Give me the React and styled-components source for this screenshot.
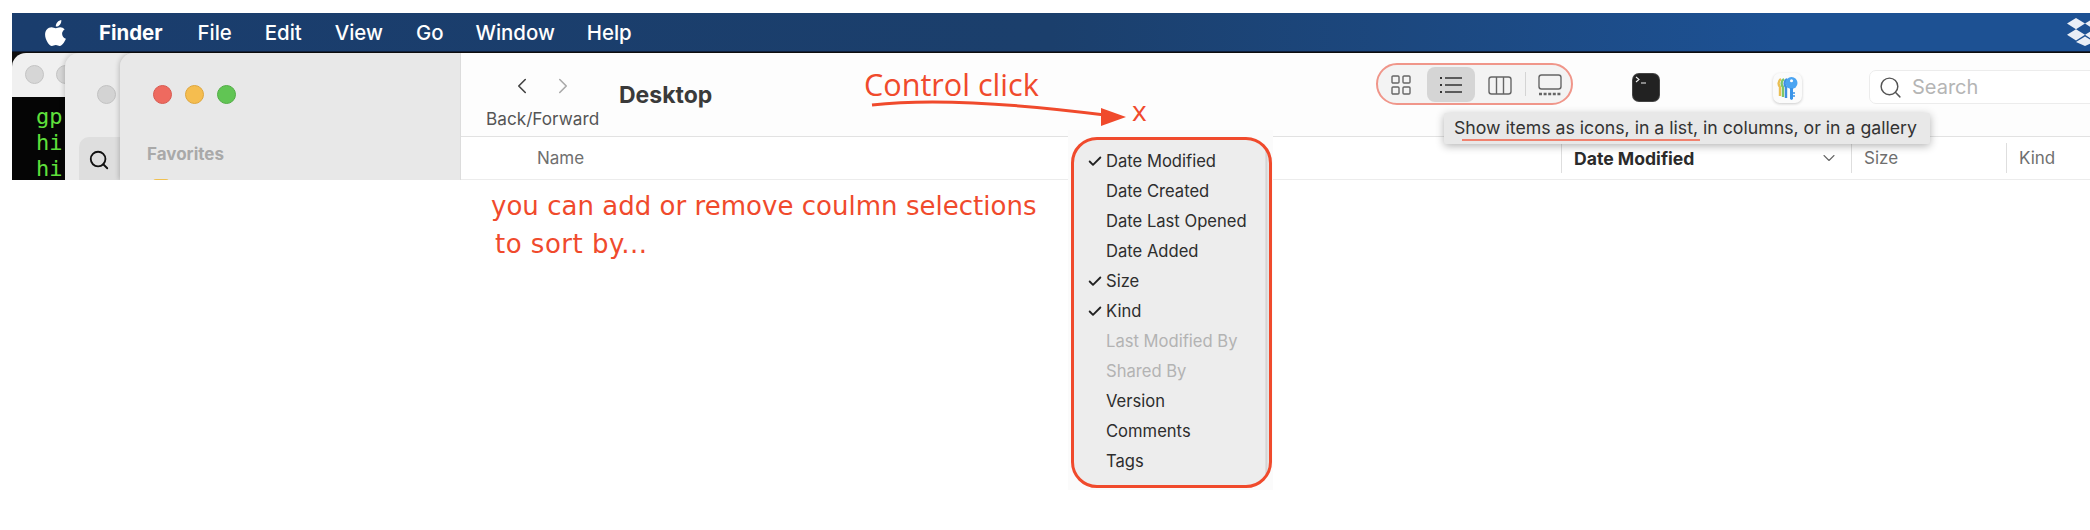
import React from 'react';
import styled, { createGlobalStyle } from 'styled-components';
import { Check, ChevronDown, ChevronLeft, ChevronRight, Search } from 'lucide-react';

const sans = '"Inter", "Liberation Sans", sans-serif';
const red = '#f04a2c';

const GlobalStyle = createGlobalStyle`
  html, body {
    margin: 0;
    height: 100%;
    background: #fff;
    overflow: hidden;
  }

  #root {
    height: 100%;
  }
`;

const Page = styled.div`
  position: relative;
  width: 2090px;
  height: 530px;
  padding: 13px 0 0 12px;
  box-sizing: border-box;
  overflow: hidden;
  font-family: ${sans};
`;

const MenuBar = styled.header`
  display: flex;
  align-items: center;
  height: 38px;
  padding-left: 33px;
  background: linear-gradient(90deg, #1a3d6d 0%, #1b3f6c 50%, #1d5193 85%, #1d5193 100%);
  border-bottom: 1px solid #10203c;
  overflow: hidden;
`;

const AppleLogo = styled.svg`
  width: 23px;
  height: 27px;
  margin-right: 31px;
  fill: #fff;
  flex: none;
`;

const MenuItem = styled.span`
  margin-right: ${(p) => p.$gap}px;
  color: #fff;
  font-size: 20.4px;
  font-weight: ${(p) => (p.$bold ? 700 : 500)};
`;

const DropboxLogo = styled.svg`
  width: 36px;
  height: 28px;
  margin-left: auto;
  margin-right: -13px;
  fill: #e9eef6;
  flex: none;
`;

const Desktop = styled.div`
  position: relative;
  height: 128px;
  background: #101010;
  overflow: hidden;
`;

const BackWindow = styled.div`
  position: absolute;
  top: 1px;
  left: ${(p) => p.$left}px;
  bottom: 0;
  width: 300px;
  border-radius: 14px 0 0 0;
  background: ${(p) => p.$bg};
  box-shadow: -1px 0 5px rgba(0, 0, 0, 0.18);
`;

const TerminalTitle = styled.div`
  display: flex;
  gap: 12px;
  height: 44px;
  padding: 12px 0 0 13px;
  box-sizing: border-box;
`;

const TerminalBody = styled.div`
  height: 84px;
  padding: 7px 0 0 24px;
  box-sizing: border-box;
  background: #050505;
  color: #5fe03c;
  font-family: "DejaVu Sans Mono", monospace;
  font-size: 22px;
  line-height: 26px;
  overflow: hidden;
`;

const TerminalLine = styled.div``;

const Light = styled.span`
  width: 19px;
  height: 19px;
  border-radius: 50%;
  box-sizing: border-box;
  background: ${(p) => p.$color};
  border: 1px solid ${(p) => p.$edge};
  flex: none;
`;

const MiddleHead = styled.div`
  padding: 32px 0 0 32px;
`;

const SearchTile = styled.div`
  width: 70px;
  height: 60px;
  margin: 33px 0 0 14px;
  padding: 12px 0 0 9px;
  box-sizing: border-box;
  border-radius: 10px;
  background: #dedede;
  color: #111;
`;

const FinderWindow = styled.div`
  position: absolute;
  top: 1px;
  left: 108px;
  right: 0;
  bottom: 0;
  display: flex;
  border-radius: 14px 0 0 0;
  overflow: hidden;
  box-shadow: -1px 0 5px rgba(0, 0, 0, 0.2);
`;

const Sidebar = styled.aside`
  position: relative;
  width: 341px;
  flex: none;
  padding: 32px 0 0 33px;
  box-sizing: border-box;
  background: #e8e8e8;
  border-right: 1px solid #dcdcdc;
`;

const Lights = styled.div`
  display: flex;
  gap: 13px;
`;

const SidebarLabel = styled.div`
  margin: 39px 0 0 -6px;
  color: #a9a9a9;
  font-size: 17px;
  font-weight: 700;
  line-height: 22px;
`;

const FolderTip = styled.div`
  width: 16px;
  height: 3px;
  margin: 14px 0 0 0;
  border-radius: 4px 4px 0 0;
  background: #f0c050;
`;

const Main = styled.main`
  flex: 1;
  min-width: 0;
  background: #fff;
`;

const Toolbar = styled.div`
  display: flex;
  height: 83px;
  padding-left: 25px;
  background: #fdfdfd;
  border-bottom: 1px solid #e2e2e2;
`;

const NavBlock = styled.div`
  display: flex;
  flex-direction: column;
  width: 114px;
  flex: none;
`;

const NavArrows = styled.div`
  display: flex;
  gap: 15px;
  margin: 20px 0 0 23px;
  height: 26px;
  align-items: center;
`;

const NavLabel = styled.div`
  margin-top: 10px;
  color: #555;
  font-size: 17.2px;
  line-height: 20px;
  white-space: nowrap;
`;

const Title = styled.h1`
  margin: 28px 0 0 19px;
  color: #3a3a3a;
  font-size: 23px;
  font-weight: 700;
  line-height: 28px;
`;

const ToolbarRight = styled.div`
  display: flex;
  margin-left: auto;
  width: 714px;
  flex: none;
`;

const ViewPill = styled.div`
  display: flex;
  align-items: center;
  width: 197px;
  height: 42px;
  margin-top: 10px;
  padding-left: 3px;
  box-sizing: border-box;
  border: 2px solid #f0968a;
  border-radius: 21px;
  background: #f3f3f3;
  flex: none;
`;

const ViewButton = styled.div`
  display: flex;
  align-items: center;
  justify-content: center;
  width: ${(p) => p.$width}px;
  height: 35px;
  margin-top: 1px;
  margin-right: ${(p) => p.$after || 0}px;
  border-radius: 8px;
  background: ${(p) => (p.$active ? '#d5d5d5' : 'transparent')};
  flex: none;
`;

const ViewDivider = styled.span`
  width: 1px;
  height: 24px;
  background: #d4d4d4;
  flex: none;
`;

const TerminalIcon = styled.div`
  width: 26px;
  height: 27px;
  margin: 21px 0 0 60px;
  padding: 2px 0 0 2px;
  box-sizing: border-box;
  border-radius: 6px;
  background: #222;
  box-shadow: 0 0 0 1px #444;
  color: #eee;
  flex: none;

  > svg {
    display: block;
  }
`;

const KeysIcon = styled.div`
  display: flex;
  align-items: center;
  justify-content: center;
  width: 29px;
  height: 30px;
  margin: 20px 0 0 114px;
  border-radius: 7px;
  background: #fbfbfb;
  box-shadow: 0 1px 3px rgba(0, 0, 0, 0.2);
  flex: none;
`;

const SearchField = styled.div`
  display: flex;
  align-items: center;
  gap: 9px;
  width: 240px;
  height: 34px;
  margin: 17px 0 0 67px;
  padding-left: 8px;
  box-sizing: border-box;
  border: 1px solid #ececec;
  border-radius: 7px;
  background: #fff;
  color: #555;
  flex: none;
`;

const SearchText = styled.span`
  color: #b5b5b5;
  font-size: 20px;
`;

const ColumnHeader = styled.div`
  display: grid;
  grid-template-columns: 1100px 290px 155px 1fr;
  align-items: center;
  height: 43px;
  box-sizing: border-box;
  border-bottom: 1px solid #ececec;
`;

const Column = styled.div`
  display: flex;
  align-items: center;
  justify-content: space-between;
  height: 30px;
  padding: 0 12px 0 ${(p) => p.$indent}px;
  border-left: ${(p) => (p.$first ? 'none' : '1px solid #dedede')};
  color: ${(p) => (p.$active ? '#2b2b2b' : '#6f6f6f')};
  font-size: ${(p) => (p.$active ? 17.6 : 17)}px;
  font-weight: ${(p) => (p.$active ? 700 : 400)};
`;

/* Marked-up overlays: they lie over the screenshot */
const Note = styled.div`
  position: absolute;
  left: ${(p) => p.$left}px;
  top: ${(p) => p.$top}px;
  color: ${red};
  font-family: ${(p) => p.$font || '"DejaVu Sans", sans-serif'};
  font-size: ${(p) => p.$size}px;
  letter-spacing: ${(p) => p.$spacing || 0}px;
  line-height: 1.2;
  white-space: nowrap;
`;

const ArrowMark = styled.svg`
  position: absolute;
  left: 865px;
  top: 98px;
  width: 265px;
  height: 30px;
`;

const Tooltip = styled.div`
  position: absolute;
  left: 1444px;
  top: 113px;
  width: 486px;
  height: 31px;
  padding-left: 10px;
  box-sizing: border-box;
  background: #e8e8e8;
  border-radius: 2px;
  box-shadow: 0 2px 8px rgba(0, 0, 0, 0.3);
  color: #333;
  font-size: 17.7px;
  line-height: 30px;
  white-space: nowrap;
`;

const TooltipMark = styled.span`
  position: absolute;
  left: 18px;
  top: 26px;
  width: 238px;
  height: 2px;
  background: #f0826f;
`;

const MenuBackdrop = styled.div`
  position: absolute;
  left: 1068px;
  top: 130px;
  width: 205px;
  height: 360px;
  padding: 7px 1px 0 3px;
  box-sizing: border-box;
  background: #fbfbfb;
`;

const ContextMenu = styled.div`
  width: 201px;
  height: 351px;
  padding-top: 6px;
  box-sizing: border-box;
  background: linear-gradient(90deg, #ededed 0, #ededed 191px, #cfcfcf 192px, #e6e6e6 194px);
  border: 3px solid ${red};
  border-radius: 26px;
`;

const MenuRow = styled.div`
  display: flex;
  align-items: center;
  height: 30px;
  color: ${(p) => (p.$disabled ? '#b3b3b3' : '#2e2e2e')};
  font-size: 16.6px;
  white-space: nowrap;
`;

const CheckSlot = styled.span`
  display: flex;
  justify-content: center;
  width: 16px;
  margin: 0 3px 0 13px;
  color: #222;
  flex: none;
`;

const menuRows = [
  { label: 'Date Modified', checked: true },
  { label: 'Date Created' },
  { label: 'Date Last Opened' },
  { label: 'Date Added' },
  { label: 'Size', checked: true },
  { label: 'Kind', checked: true },
  { label: 'Last Modified By', disabled: true },
  { label: 'Shared By', disabled: true },
  { label: 'Version' },
  { label: 'Comments' },
  { label: 'Tags' }
];

const menuItems = [
  { label: 'File', gap: 33 },
  { label: 'Edit', gap: 33 },
  { label: 'View', gap: 33 },
  { label: 'Go', gap: 32 },
  { label: 'Window', gap: 32 },
  { label: 'Help', gap: 0 }
];

const GridIcon = () => (
  <svg width="22" height="24" viewBox="0 0 22 24" fill="none" stroke="#666" strokeWidth="1.4">
    <rect x="2" y="3" width="7" height="7" rx="1" />
    <rect x="13" y="3" width="7" height="7" rx="1" />
    <rect x="2" y="14" width="7" height="7" rx="1" />
    <rect x="13" y="14" width="7" height="7" rx="1" />
  </svg>
);

const ListIcon = () => (
  <svg width="24" height="22" viewBox="0 0 24 22" fill="none" stroke="#333" strokeWidth="1.6">
    <path d="M6 4h17M6 11h17M6 18h17" />
    <path d="M1 4h2M1 11h2M1 18h2" strokeWidth="2" />
  </svg>
);

const ColumnsIcon = () => (
  <svg width="26" height="22" viewBox="0 0 26 22" fill="none" stroke="#666" strokeWidth="1.4">
    <rect x="2" y="3" width="22" height="17" rx="2.5" />
    <path d="M9.5 3v17M16.5 3v17" />
  </svg>
);

const GalleryIcon = () => (
  <svg width="26" height="24" viewBox="0 0 26 24" fill="none" stroke="#666" strokeWidth="1.4">
    <rect x="2" y="2" width="22" height="14" rx="2.5" />
    <path d="M2 21h22" strokeWidth="2.4" strokeDasharray="3 1.6" />
  </svg>
);

const KeysGlyph = () => (
  <svg width="21" height="24" viewBox="0 0 21 24" fill="none">
    <path d="M4 3c-3 2-3 6-1 8v9" stroke="#e9bf55" strokeWidth="2.4" />
    <path d="M7 3c-3 2-3 6-1 8v10" stroke="#7cc66a" strokeWidth="2.4" />
    <path d="M10 3c-3 2-3 6-1 8v11" stroke="#3f8fe0" strokeWidth="2.4" />
    <circle cx="14.5" cy="7" r="6" fill="#4aa4f2" />
    <circle cx="14.5" cy="4.8" r="1.5" fill="#fff" />
    <path d="M13 12h3v11l-1.500 1-1.500-1z" fill="#3a94e8" />
    <path d="M16 17h2M16 20h2" stroke="#3a94e8" strokeWidth="1.6" />
  </svg>
);

const App = () => (
  <>
    <GlobalStyle />
    <Page>
      <MenuBar>
        <AppleLogo viewBox="0 0 24 28">
          <path d="M17 1c.2 2-.5 3.600-1.500 4.800-1.100 1.300-2.700 2.200-4.200 2-.2-1.700.6-3.500 1.600-4.600C14 2 15.700 1.100 17 1zM21.800 20.600c-.8 1.800-1.200 2.600-2.200 4.100-1.400 2.100-2.800 3.300-4.300 3.300-1.400 0-2.200-.9-4-.9s-2.700.9-4.100.9c-1.700 0-3-1.400-4.300-3.400C-.5 19.300-.8 13.700 1.900 10.800c1.300-1.500 3.200-2.300 4.900-2.300 1.800 0 3 1 4.500 1s2.400-1 4.600-1c1.600 0 3.400.8 4.600 2.400-4 2.300-3.400 8 1.300 9.700z" />
        </AppleLogo>
        <MenuItem $bold $gap={35}>Finder</MenuItem>
        {menuItems.map((item) => (
          <MenuItem key={item.label} $gap={item.gap}>{item.label}</MenuItem>
        ))}
        <DropboxLogo viewBox="0 0 36 28">
          <path d="M9 0l9 5.600-9 5.600L0 5.600zM27 0l9 5.600-9 5.600-9-5.600zM0 16.800l9-5.600 9 5.600-9 5.600zM27 11.200l9 5.600-9 5.600-9-5.600zM9 24l9-5.600 9 5.600-9 4z" />
        </DropboxLogo>
      </MenuBar>

      <Desktop>
        <BackWindow $left={0} $bg="#f0f0f0">
          <TerminalTitle>
            <Light $color="#d6d6d6" $edge="#c4c4c4" />
            <Light $color="#d6d6d6" $edge="#c4c4c4" />
          </TerminalTitle>
          <TerminalBody>
            <TerminalLine>gp</TerminalLine>
            <TerminalLine>hi</TerminalLine>
            <TerminalLine>hi</TerminalLine>
          </TerminalBody>
        </BackWindow>

        <BackWindow $left={53} $bg="#ebebeb">
          <MiddleHead>
            <Light as="div" $color="#d3d3d3" $edge="#c2c2c2" />
          </MiddleHead>
          <SearchTile>
            <Search size={22} strokeWidth={2} />
          </SearchTile>
        </BackWindow>

        <FinderWindow>
          <Sidebar>
            <Lights>
              <Light $color="#ee6a5f" $edge="#d85a50" />
              <Light $color="#f5bd4f" $edge="#dea63c" />
              <Light $color="#61c554" $edge="#52ad46" />
            </Lights>
            <SidebarLabel>Favorites</SidebarLabel>
            <FolderTip />
          </Sidebar>

          <Main>
            <Toolbar>
              <NavBlock>
                <NavArrows>
                  <ChevronLeft size={26} strokeWidth={1.5} color="#444" />
                  <ChevronRight size={26} strokeWidth={1.5} color="#aaa" />
                </NavArrows>
                <NavLabel>Back/Forward</NavLabel>
              </NavBlock>
              <Title>Desktop</Title>
              <ToolbarRight>
                <ViewPill>
                  <ViewButton $width={40} $after={6}><GridIcon /></ViewButton>
                  <ViewButton $width={48} $active><ListIcon /></ViewButton>
                  <ViewButton $width={50}><ColumnsIcon /></ViewButton>
                  <ViewDivider />
                  <ViewButton $width={48}><GalleryIcon /></ViewButton>
                </ViewPill>
                <TerminalIcon>
                  <svg width="12" height="9" viewBox="0 0 12 9" fill="none" stroke="currentColor" strokeWidth="1.1">
                    <path d="M1 1l3 2.500L1 6M6 7h5" />
                  </svg>
                </TerminalIcon>
                <KeysIcon><KeysGlyph /></KeysIcon>
                <SearchField>
                  <Search size={25} strokeWidth={1.4} />
                  <SearchText>Search</SearchText>
                </SearchField>
              </ToolbarRight>
            </Toolbar>
            <ColumnHeader>
              <Column $first $indent={76}>Name</Column>
              <Column $active $indent={12}>
                Date Modified
                <ChevronDown size={20} strokeWidth={1.3} color="#666" />
              </Column>
              <Column $indent={12}>Size</Column>
              <Column $indent={12}>Kind</Column>
            </ColumnHeader>
          </Main>
        </FinderWindow>
      </Desktop>

      <Note $left={864} $top={66} $size={30.6} $font='"Open Sans", sans-serif'>Control click</Note>
      <ArrowMark viewBox="0 0 265 30" fill="none">
        <path d="M7 7C60 1 130 3 240 17" stroke={red} strokeWidth="3" />
        <path d="M236 10l25 9-25 9z" fill={red} />
      </ArrowMark>
      <Note $left={1132} $top={94} $size={28} $font='"Open Sans", sans-serif'>x</Note>

      <Note $left={491} $top={191} $size={26} $spacing={0.03}>you can add or remove coulmn selections</Note>
      <Note $left={495} $top={229} $size={26} $spacing={0.5}>to sort by...</Note>

      <Tooltip>
        Show items as icons, in a list, in columns, or in a gallery
        <TooltipMark />
      </Tooltip>

      <MenuBackdrop>
        <ContextMenu>
          {menuRows.map((row) => (
            <MenuRow key={row.label} $disabled={row.disabled}>
              <CheckSlot>{row.checked && <Check size={17} strokeWidth={2.8} />}</CheckSlot>
              {row.label}
            </MenuRow>
          ))}
        </ContextMenu>
      </MenuBackdrop>
    </Page>
  </>
);

export default App;
